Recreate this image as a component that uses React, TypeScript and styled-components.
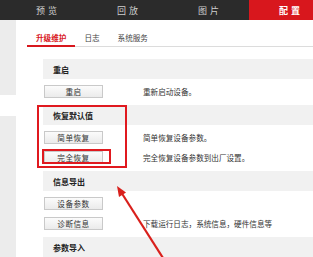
import React from "react";
import styled, { createGlobalStyle } from "styled-components";

const Global = createGlobalStyle`
  html, body { margin: 0; padding: 0; background: #fff; }
  body {
    width: 313px; height: 257px; overflow: hidden;
    font-family: "Noto Sans CJK SC", "Noto Sans", sans-serif;
    color: #333;
  }
`;

const Page = styled.div`
  position: relative;
  width: 313px;
  height: 257px;
  overflow: hidden;
  display: flex;
  flex-direction: column;
`;

const Nav = styled.div`
  height: 20px;
  background: #2b2b2b;
  display: flex;
  padding-left: 6px;
  flex-shrink: 0;
`;

const NavItem = styled.div<{ $active?: boolean }>`
  width: 81px;
  flex-shrink: 0;
  display: flex;
  align-items: center;
  justify-content: center;
  font-size: 9px;
  letter-spacing: 3px;
  text-indent: 3px;
  color: ${(p) => (p.$active ? "#fff" : "#cfcfcf")};
  font-weight: ${(p) => (p.$active ? 700 : 400)};
  background: ${(p) => (p.$active ? "#d8171d" : "transparent")};
`;

const Body = styled.div`
  flex: 1;
  display: flex;
`;

const Sidebar = styled.div`
  width: 16px;
  flex-shrink: 0;
  display: flex;
  flex-direction: column;
  gap: 21px;
`;

const SideBlock = styled.div<{ $h?: number }>`
  background: #ececec;
  ${(p) => (p.$h ? `height: ${p.$h}px;` : "flex: 1;")}
`;

const Main = styled.div`
  flex: 1;
  padding-left: 11px;
  display: flex;
  flex-direction: column;
`;

const SubTabs = styled.div`
  height: 26px;
  display: flex;
  align-items: flex-end;
  border-bottom: 1px solid #dcdcdc;
`;

const SubTab = styled.div<{ $active?: boolean }>`
  padding: 0 9px 2px;
  font-size: 7.6px;
  line-height: 10px;
  margin-bottom: -1px;
  color: ${(p) => (p.$active ? "#d8171d" : "#444")};
  font-weight: ${(p) => (p.$active ? 700 : 400)};
  border-bottom: 2px solid ${(p) => (p.$active ? "#d8171d" : "transparent")};
`;

const Sections = styled.div`
  padding-top: 12px;
  padding-left: 16px;
  display: flex;
  flex-direction: column;
  gap: 4px;
`;

const Section = styled.div`
  position: relative;
`;

const Header = styled.div`
  height: 20px;
  background: #f1f1f1;
  padding-left: 10px;
  display: flex;
  align-items: center;
  font-size: 8px;
  font-weight: 700;
  color: #222;
`;

const Rows = styled.div`
  padding-top: 2px;
`;

const Row = styled.div`
  height: 20px;
  display: grid;
  grid-template-columns: 100px 1fr;
  align-items: center;
`;

const BtnWrap = styled.div`
  position: relative;
  width: 59px;
  margin-left: 1px;
`;

const Button = styled.div`
  box-sizing: border-box;
  width: 59px;
  height: 13px;
  border: 1px solid #c9c9c9;
  background: linear-gradient(#fbfbfb, #ebebeb);
  display: flex;
  align-items: center;
  justify-content: center;
  font-size: 7.6px;
  letter-spacing: 0.5px;
  color: #333;
`;

const Desc = styled.div`
  font-size: 7.6px;
  color: #333;
  white-space: nowrap;
`;

const BigHighlight = styled.div`
  position: absolute;
  left: -6px;
  top: 0;
  width: 90px;
  height: 63px;
  box-sizing: border-box;
  border: 2px solid #e0191f;
  pointer-events: none;
`;

const SmallHighlight = styled.div`
  position: absolute;
  left: -2px;
  top: -2px;
  width: 69px;
  height: 15px;
  box-sizing: border-box;
  border: 2px solid #e0191f;
  pointer-events: none;
`;

const ArrowSvg = styled.svg`
  position: absolute;
  left: 0;
  top: 0;
  pointer-events: none;
`;

type RowData = { label: string; desc?: string; mark?: boolean };
type SectionData = { title: string; rows: RowData[]; box?: boolean };

const sections: SectionData[] = [
  { title: "重启", rows: [{ label: "重启", desc: "重新启动设备。" }] },
  {
    title: "恢复默认值",
    box: true,
    rows: [
      { label: "简单恢复", desc: "简单恢复设备参数。" },
      { label: "完全恢复", desc: "完全恢复设备参数到出厂设置。", mark: true },
    ],
  },
  {
    title: "信息导出",
    rows: [
      { label: "设备参数" },
      { label: "诊断信息", desc: "下载运行日志，系统信息，硬件信息等" },
    ],
  },
  { title: "参数导入", rows: [] },
];

export default function App() {
  return (
    <Page>
      <Global />
      <Nav>
        <NavItem>预览</NavItem>
        <NavItem>回放</NavItem>
        <NavItem>图片</NavItem>
        <NavItem $active>配置</NavItem>
      </Nav>
      <Body>
        <Sidebar>
          <SideBlock $h={75} />
          <SideBlock />
        </Sidebar>
        <Main>
          <SubTabs>
            <SubTab $active>升级维护</SubTab>
            <SubTab>日志</SubTab>
            <SubTab>系统服务</SubTab>
          </SubTabs>
          <Sections>
            {sections.map((s) => (
              <Section key={s.title}>
                <Header>{s.title}</Header>
                {s.rows.length > 0 && (
                  <Rows>
                    {s.rows.map((r) => (
                      <Row key={r.label}>
                        <BtnWrap>
                          <Button>{r.label}</Button>
                          {r.mark && <SmallHighlight />}
                        </BtnWrap>
                        <Desc>{r.desc ?? ""}</Desc>
                      </Row>
                    ))}
                  </Rows>
                )}
                {s.box && <BigHighlight />}
              </Section>
            ))}
          </Sections>
        </Main>
      </Body>
      <ArrowSvg width="313" height="257" viewBox="0 0 313 257">
        <line x1="163" y1="258" x2="121" y2="192" stroke="#d9201c" strokeWidth="2.2" />
        <polygon points="117,186 126,192.6 119,197" fill="#d9201c" />
      </ArrowSvg>
    </Page>
  );
}
